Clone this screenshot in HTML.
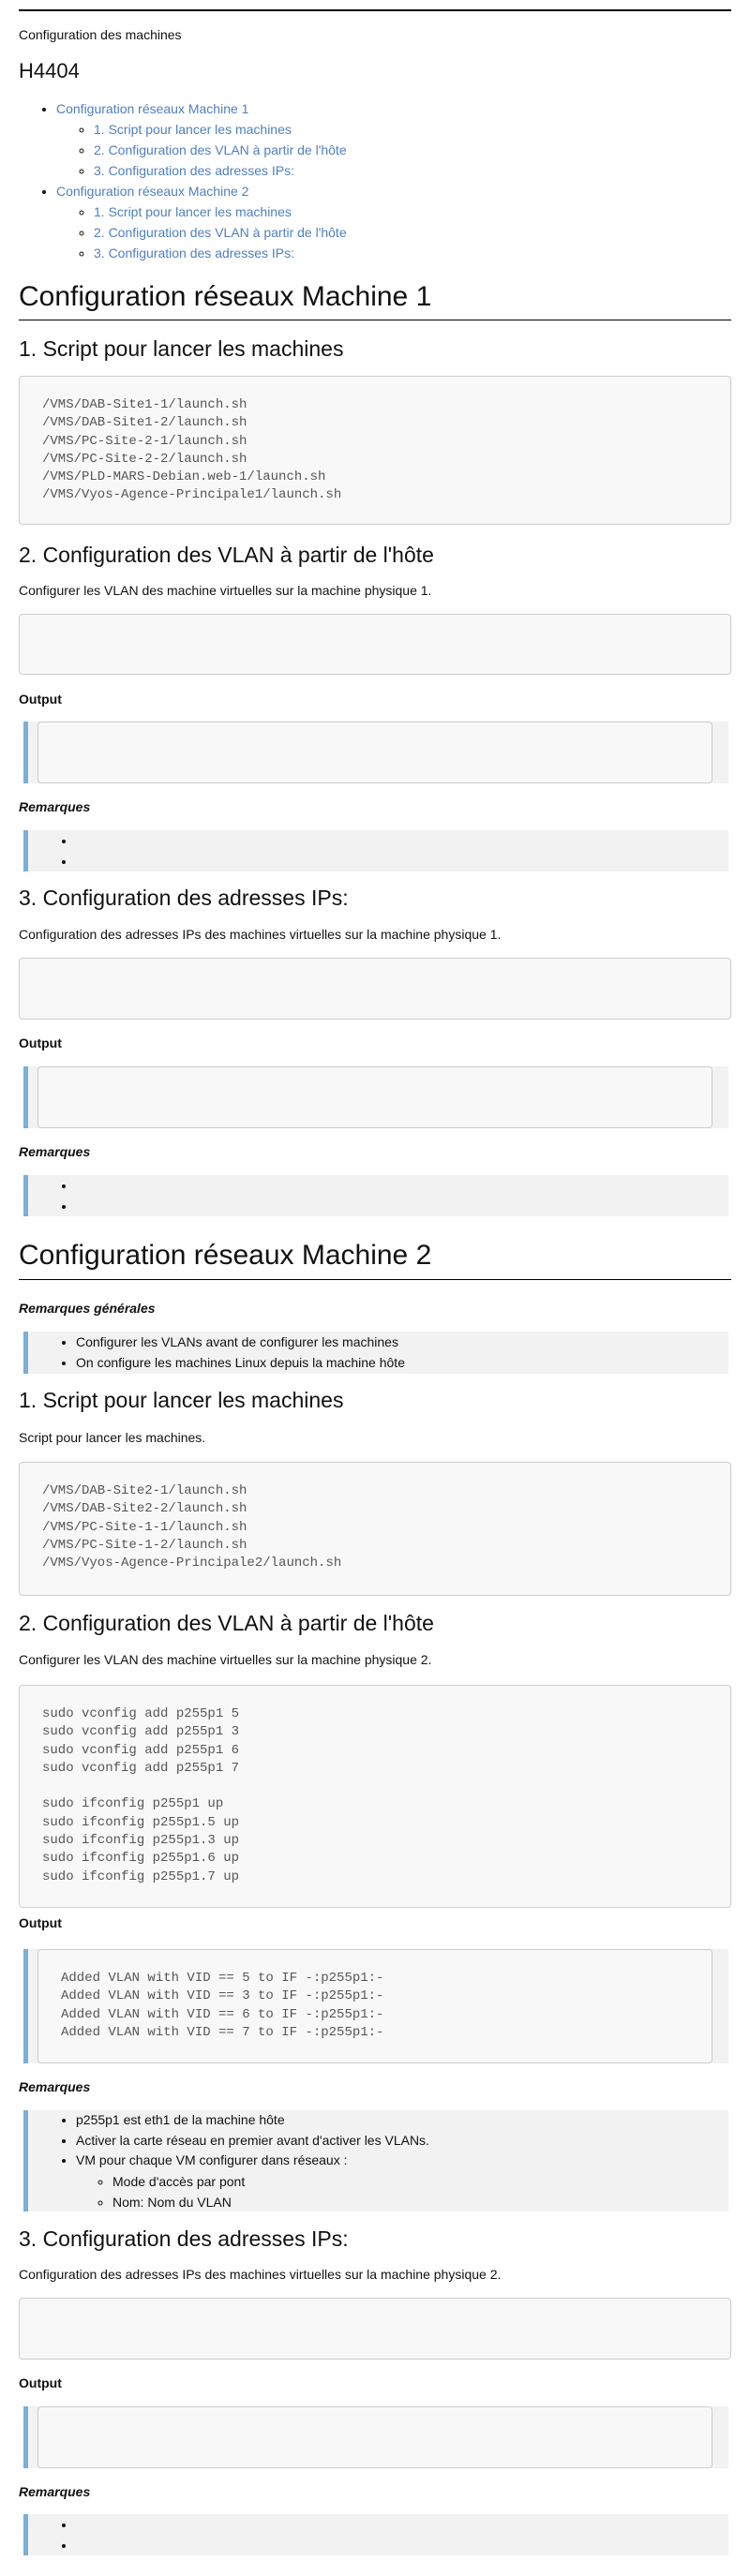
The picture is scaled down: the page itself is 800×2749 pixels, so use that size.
<!DOCTYPE html>
<html><head><meta charset="utf-8">
<style>
html,body{margin:0;padding:0;background:#fff;}
body{width:800px;height:2749px;position:relative;font-family:"Liberation Sans",Arial,sans-serif;color:#111;font-size:14px;overflow:hidden;}
.a{position:absolute;left:20px;margin:0;white-space:nowrap;}
.rule{left:20px;width:760px;background:#000;}
.h1{font-size:30px;line-height:36px;font-weight:normal;}
.h2{font-size:23px;line-height:28px;font-weight:normal;}
.p{font-size:14px;line-height:20px;}
.lab{font-size:14px;line-height:20px;font-weight:bold;}
.rem{font-size:14px;line-height:20px;font-weight:bold;font-style:italic;}
.code{width:760px;background:#f8f8f8;border:1px solid #ccc;border-radius:4px;box-sizing:border-box;padding:21px 0 0 24px;font-family:"Liberation Mono",monospace;font-size:14px;line-height:19.3px;color:#555;white-space:pre;}
.bq{left:25px;width:752px;background:#f2f2f2;border-left:5px solid #7aafd8;box-sizing:border-box;}
.bq .code{position:absolute;left:10px;top:0;width:720px;height:100%;}
.bq ul{margin:0;padding:0 0 0 51px;list-style:disc;line-height:22px;font-size:14px;}
.bq ul ul{padding-left:39px;list-style:circle;}
.toc{position:absolute;left:20px;top:105px;margin:0;padding:0 0 0 40px;line-height:22px;font-size:14px;list-style:disc;}
.toc ul{margin:0;padding-left:40px;list-style:circle;}
.toc a{color:#4f7fc0;text-decoration:none;}
</style></head><body>
<div class="a rule" style="top:10px;height:2px"></div>
<p class="a p" style="top:27px">Configuration des machines</p>
<div class="a" style="top:63px;font-size:22px;line-height:26px">H4404</div>
<ul class="toc">
<li><a>Configuration réseaux Machine 1</a>
<ul><li><a>1. Script pour lancer les machines</a></li><li><a>2. Configuration des VLAN à partir de l'hôte</a></li><li><a>3. Configuration des adresses IPs:</a></li></ul></li>
<li><a>Configuration réseaux Machine 2</a>
<ul><li><a>1. Script pour lancer les machines</a></li><li><a>2. Configuration des VLAN à partir de l'hôte</a></li><li><a>3. Configuration des adresses IPs:</a></li></ul></li>
</ul>

<div class="a h1" style="top:299px">Configuration réseaux Machine 1</div>
<div class="a rule" style="top:341px;height:1px"></div>
<div class="a h2" style="top:358px">1. Script pour lancer les machines</div>
<div class="a code" style="top:401px;height:159px">/VMS/DAB-Site1-1/launch.sh
/VMS/DAB-Site1-2/launch.sh
/VMS/PC-Site-2-1/launch.sh
/VMS/PC-Site-2-2/launch.sh
/VMS/PLD-MARS-Debian.web-1/launch.sh
/VMS/Vyos-Agence-Principale1/launch.sh</div>
<div class="a h2" style="top:578px">2. Configuration des VLAN à partir de l'hôte</div>
<p class="a p" style="top:620px">Configurer les VLAN des machine virtuelles sur la machine physique 1.</p>
<div class="a code" style="top:655px;height:65px"></div>
<div class="a lab" style="top:736px">Output</div>
<div class="a bq" style="top:770px;height:66px"><div class="code"></div></div>
<div class="a rem" style="top:851px">Remarques</div>
<div class="a bq" style="top:886px;height:44px"><ul><li>&nbsp;</li><li>&nbsp;</li></ul></div>
<div class="a h2" style="top:944px">3. Configuration des adresses IPs:</div>
<p class="a p" style="top:987px">Configuration des adresses IPs des machines virtuelles sur la machine physique 1.</p>
<div class="a code" style="top:1022px;height:66px"></div>
<div class="a lab" style="top:1103px">Output</div>
<div class="a bq" style="top:1138px;height:66px"><div class="code"></div></div>
<div class="a rem" style="top:1219px">Remarques</div>
<div class="a bq" style="top:1254px;height:44px"><ul><li>&nbsp;</li><li>&nbsp;</li></ul></div>

<div class="a h1" style="top:1322px">Configuration réseaux Machine 2</div>
<div class="a rule" style="top:1365px;height:1px"></div>
<div class="a rem" style="top:1386px">Remarques générales</div>
<div class="a bq" style="top:1421px;height:45px"><ul><li>Configurer les VLANs avant de configurer les machines</li><li>On configure les machines Linux depuis la machine hôte</li></ul></div>
<div class="a h2" style="top:1480px">1. Script pour lancer les machines</div>
<p class="a p" style="top:1524px">Script pour lancer les machines.</p>
<div class="a code" style="top:1560px;height:143px">/VMS/DAB-Site2-1/launch.sh
/VMS/DAB-Site2-2/launch.sh
/VMS/PC-Site-1-1/launch.sh
/VMS/PC-Site-1-2/launch.sh
/VMS/Vyos-Agence-Principale2/launch.sh</div>
<div class="a h2" style="top:1718px">2. Configuration des VLAN à partir de l'hôte</div>
<p class="a p" style="top:1761px">Configurer les VLAN des machine virtuelles sur la machine physique 2.</p>
<div class="a code" style="top:1798px;height:238px">sudo vconfig add p255p1 5
sudo vconfig add p255p1 3
sudo vconfig add p255p1 6
sudo vconfig add p255p1 7

sudo ifconfig p255p1 up
sudo ifconfig p255p1.5 up
sudo ifconfig p255p1.3 up
sudo ifconfig p255p1.6 up
sudo ifconfig p255p1.7 up</div>
<div class="a lab" style="top:2042px">Output</div>
<div class="a bq" style="top:2080px;height:122px"><div class="code">Added VLAN with VID == 5 to IF -:p255p1:-
Added VLAN with VID == 3 to IF -:p255p1:-
Added VLAN with VID == 6 to IF -:p255p1:-
Added VLAN with VID == 7 to IF -:p255p1:-</div></div>
<div class="a rem" style="top:2217px">Remarques</div>
<div class="a bq" style="top:2252px;height:108px"><ul style="line-height:21.7px"><li>p255p1 est eth1 de la machine hôte</li><li>Activer la carte réseau en premier avant d'activer les VLANs.</li><li>VM pour chaque VM configurer dans réseaux :<ul><li>Mode d'accès par pont</li><li>Nom: Nom du VLAN</li></ul></li></ul></div>
<div class="a h2" style="top:2375px">3. Configuration des adresses IPs:</div>
<p class="a p" style="top:2417px">Configuration des adresses IPs des machines virtuelles sur la machine physique 2.</p>
<div class="a code" style="top:2452px;height:66px"></div>
<div class="a lab" style="top:2533px">Output</div>
<div class="a bq" style="top:2568px;height:66px"><div class="code"></div></div>
<div class="a rem" style="top:2649px">Remarques</div>
<div class="a bq" style="top:2683px;height:44px"><ul><li>&nbsp;</li><li>&nbsp;</li></ul></div>
</body></html>
